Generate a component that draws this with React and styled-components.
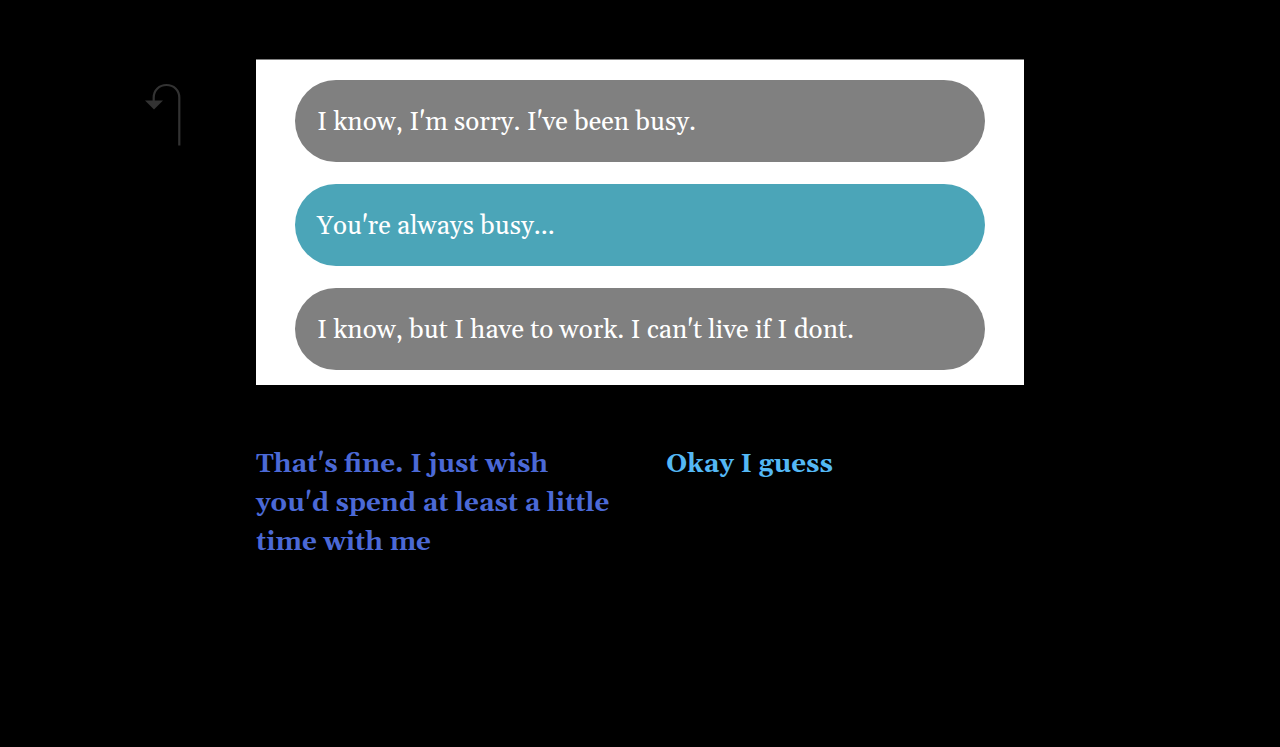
import React from 'react'
import styled, { createGlobalStyle } from 'styled-components'

const messages = [
  { id: 1, text: "I know, I'm sorry. I've been busy." },
  { id: 2, text: "You're always busy...", mine: true },
  { id: 3, text: "I know, but I have to work. I can't live if I dont." },
]

const replies = [
  {
    id: 'time',
    text: "That's fine. I just wish you'd spend at least a little time with me",
    color: '#4b69d6',
  },
  { id: 'okay', text: 'Okay I guess', color: '#54b8f5' },
]

const GlobalStyle = createGlobalStyle`
  * {
    box-sizing: border-box;
  }

  body {
    margin: 0;
    background: #000;
    font-family: Georgia, Gelasio, 'Liberation Serif', serif;
    font-size: 26px;
    line-height: 39px;
  }
`

const Story = styled.div`
  display: grid;
  grid-template-columns: 1fr 3fr 1fr;
  padding-top: 59px;
`

const Sidebar = styled.nav`
  display: flex;
  justify-content: flex-end;
  align-items: flex-start;
  padding: 24px 75px 0 0;
`

const UndoButton = styled.button`
  display: flex;
  padding: 0;
  border: 0;
  background: none;
  color: #333;
  cursor: pointer;
`

const Chat = styled.ul`
  display: flex;
  flex-direction: column;
  gap: 22px;
  margin: 0;
  padding: 20px 39px 15px;
  border-top: 1px solid #808080;
  background: #fff;
  list-style: none;
`

const Bubble = styled.li`
  padding: 23px 22px 20px;
  border-radius: 41px;
  background: ${props => (props.$mine ? '#4ba5b8' : '#808080')};
  color: #fff;
`

const Replies = styled.div`
  display: grid;
  grid-template-columns: 1fr 1fr;
  gap: 52px;
  padding: 60px 0;
`

const Reply = styled.a`
  color: ${props => props.$color};
  font-weight: bold;
  text-decoration: none;
`

const UndoIcon = () => (
  <svg width="36" height="63" viewBox="0 0 36 63" fill="none" aria-hidden="true">
    <path
      d="M34.3 62.5V14.5C34.3 7 28.6 2 21.5 2C14.4 2 8.7 7 8.7 14.5V19"
      stroke="currentColor"
      strokeWidth="2.2"
    />
    <path d="M0 17.5H18L9 26.5Z" fill="currentColor" />
  </svg>
)

const App = () => (
  <React.Fragment>
    <GlobalStyle />
    <Story>
      <Sidebar>
        <UndoButton type="button" aria-label="Undo">
          <UndoIcon />
        </UndoButton>
      </Sidebar>
      <main>
        <Chat>
          {messages.map(message => (
            <Bubble key={message.id} $mine={message.mine}>
              {message.text}
            </Bubble>
          ))}
        </Chat>
        <Replies>
          {replies.map(reply => (
            <div key={reply.id}>
              <Reply href={`#${reply.id}`} $color={reply.color}>
                {reply.text}
              </Reply>
            </div>
          ))}
        </Replies>
      </main>
    </Story>
  </React.Fragment>
)

export default App
